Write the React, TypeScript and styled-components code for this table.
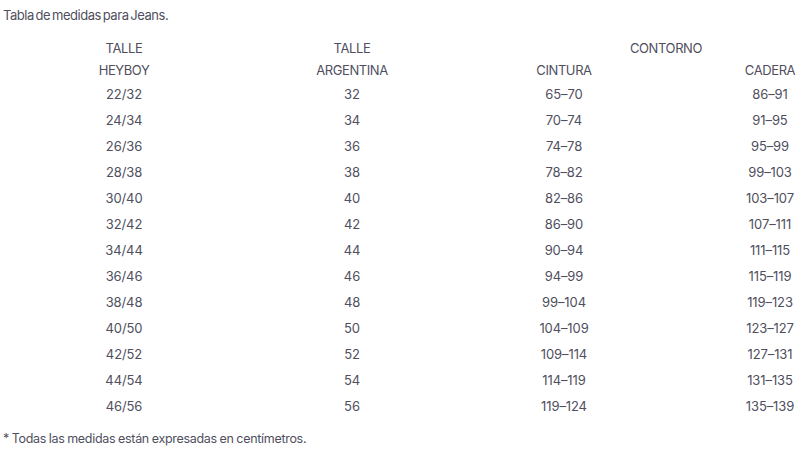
import React from 'react';
import styled, { createGlobalStyle } from 'styled-components';

const GlobalStyle = createGlobalStyle`
  html, body {
    margin: 0;
    padding: 0;
    background: #ffffff;
    overflow: hidden;
  }
  body {
    font-family: 'Inter', 'Lato', sans-serif;
    color: #4f4f5e;
  }
`;

const Page = styled.div`
  width: 805px;
  padding: 7px 0 0 3px;
  box-sizing: border-box;
`;

const Title = styled.p`
  margin: 0 0 13px;
  font-size: 13px;
  line-height: 17px;
  letter-spacing: -0.45px;
  word-spacing: -1.5px;
`;

const Grid = styled.div`
  display: grid;
  grid-template-columns: 242px 214px 210px 66px 70px;
`;

const HeadCell = styled.div<{ $span?: number; $shift?: number }>`
  grid-column: ${(p) => (p.$span ? `span ${p.$span}` : 'auto')};
  padding-left: ${(p) => p.$shift ?? 0}px;
  text-align: center;
  font-size: 13px;
  line-height: 22px;
  height: 22px;
  letter-spacing: -0.4px;
  text-transform: uppercase;
`;

const Cell = styled.div<{ $col: number }>`
  grid-column: ${(p) => p.$col};
  text-align: center;
  font-size: 13px;
  line-height: 26px;
  height: 26px;
  letter-spacing: -0.1px;
`;

const Note = styled.p`
  margin: 11px 0 0;
  font-size: 12.5px;
  line-height: 17px;
  letter-spacing: -0.3px;
  word-spacing: -0.5px;
`;

const rows: [string, string, string, string][] = [
  ['22/32', '32', '65–70', '86–91'],
  ['24/34', '34', '70–74', '91–95'],
  ['26/36', '36', '74–78', '95–99'],
  ['28/38', '38', '78–82', '99–103'],
  ['30/40', '40', '82–86', '103–107'],
  ['32/42', '42', '86–90', '107–111'],
  ['34/44', '44', '90–94', '111–115'],
  ['36/46', '46', '94–99', '115–119'],
  ['38/48', '48', '99–104', '119–123'],
  ['40/50', '50', '104–109', '123–127'],
  ['42/52', '52', '109–114', '127–131'],
  ['44/54', '54', '114–119', '131–135'],
  ['46/56', '56', '119–124', '135–139'],
];

const App: React.FC = () => {
  return (
    <>
      <GlobalStyle />
      <Page>
        <Title>Tabla de medidas para Jeans.</Title>
        <Grid>
          <HeadCell>Talle</HeadCell>
          <HeadCell>Talle</HeadCell>
          <HeadCell $span={3} $shift={68}>Contorno</HeadCell>

          <HeadCell>Heyboy</HeadCell>
          <HeadCell>Argentina</HeadCell>
          <HeadCell>Cintura</HeadCell>
          <HeadCell />
          <HeadCell>Cadera</HeadCell>

          {rows.map((r) => (
            <React.Fragment key={r[0]}>
              <Cell $col={1}>{r[0]}</Cell>
              <Cell $col={2}>{r[1]}</Cell>
              <Cell $col={3}>{r[2]}</Cell>
              <Cell $col={5}>{r[3]}</Cell>
            </React.Fragment>
          ))}
        </Grid>
        <Note>* Todas las medidas están expresadas en centímetros.</Note>
      </Page>
    </>
  );
};

export default App;
